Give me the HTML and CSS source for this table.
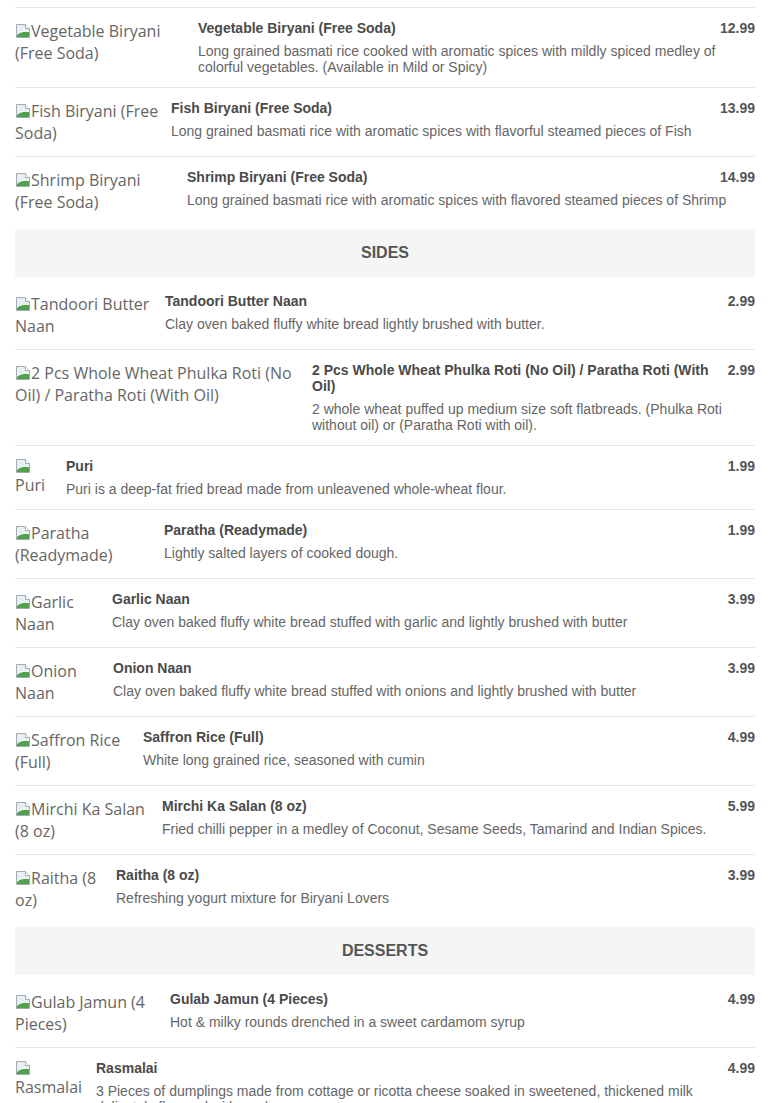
FILE: index.html
```html
<!DOCTYPE html>
<html lang="en">
<head>
<meta charset="utf-8">
<title>Menu</title>
<link rel="stylesheet" href="styles.css">
</head>
<body>
<svg class="defs" width="0" height="0" aria-hidden="true">
  <defs>
    <symbol id="broken" viewBox="0 0 16 16">
      <path d="M1.5 1.5h9l4 4v9h-13z" fill="#e9eef2" stroke="#a3acb3"/>
      <path d="M2 14 L2 11.5 Q6 7.5 14 8.5 L14 14 Z" fill="#52a04c"/>
      <path d="M2 11.5 Q6 7.5 14 8.5" fill="none" stroke="#ffffff" stroke-width="1"/>
      <path d="M10.5 1.5v4h4" fill="#ffffff" stroke="#a3acb3"/>
    </symbol>
  </defs>
</svg>
<div class="menu">
  <div class="lead"></div>

  <div class="item">
    <div class="thumb w-veg"><svg class="ico"><use href="#broken"/></svg>Vegetable Biryani (Free Soda)</div>
    <div class="body">
      <div class="head"><h3 class="name">Vegetable Biryani (Free Soda)</h3><span class="price">12.99</span></div>
      <p class="desc">Long grained basmati rice cooked with aromatic spices with mildly spiced medley of colorful vegetables. (Available in Mild or Spicy)</p>
    </div>
  </div>

  <div class="item">
    <div class="thumb w-fish"><svg class="ico"><use href="#broken"/></svg>Fish Biryani (Free Soda)</div>
    <div class="body">
      <div class="head"><h3 class="name">Fish Biryani (Free Soda)</h3><span class="price">13.99</span></div>
      <p class="desc">Long grained basmati rice with aromatic spices with flavorful steamed pieces of Fish</p>
    </div>
  </div>

  <div class="item last">
    <div class="thumb w-shrimp"><svg class="ico"><use href="#broken"/></svg>Shrimp Biryani (Free Soda)</div>
    <div class="body">
      <div class="head"><h3 class="name">Shrimp Biryani (Free Soda)</h3><span class="price">14.99</span></div>
      <p class="desc">Long grained basmati rice with aromatic spices with flavored steamed pieces of Shrimp</p>
    </div>
  </div>

  <h2 class="section">SIDES</h2>

  <div class="item">
    <div class="thumb w-tandoori"><svg class="ico"><use href="#broken"/></svg>Tandoori Butter Naan</div>
    <div class="body">
      <div class="head"><h3 class="name">Tandoori Butter Naan</h3><span class="price">2.99</span></div>
      <p class="desc">Clay oven baked fluffy white bread lightly brushed with butter.</p>
    </div>
  </div>

  <div class="item">
    <div class="thumb w-roti"><svg class="ico"><use href="#broken"/></svg>2 Pcs Whole Wheat Phulka Roti (No Oil) / Paratha Roti (With Oil)</div>
    <div class="body">
      <div class="head"><h3 class="name">2 Pcs Whole Wheat Phulka Roti (No Oil) / Paratha Roti (With Oil)</h3><span class="price">2.99</span></div>
      <p class="desc">2 whole wheat puffed up medium size soft flatbreads. (Phulka Roti without oil) or (Paratha Roti with oil).</p>
    </div>
  </div>

  <div class="item">
    <div class="thumb stack w-puri"><svg class="ico"><use href="#broken"/></svg>Puri</div>
    <div class="body">
      <div class="head"><h3 class="name">Puri</h3><span class="price">1.99</span></div>
      <p class="desc">Puri is a deep-fat fried bread made from unleavened whole-wheat flour.</p>
    </div>
  </div>

  <div class="item">
    <div class="thumb w-paratha"><svg class="ico"><use href="#broken"/></svg>Paratha (Readymade)</div>
    <div class="body">
      <div class="head"><h3 class="name">Paratha (Readymade)</h3><span class="price">1.99</span></div>
      <p class="desc">Lightly salted layers of cooked dough.</p>
    </div>
  </div>

  <div class="item">
    <div class="thumb w-garlic"><svg class="ico"><use href="#broken"/></svg>Garlic Naan</div>
    <div class="body">
      <div class="head"><h3 class="name">Garlic Naan</h3><span class="price">3.99</span></div>
      <p class="desc">Clay oven baked fluffy white bread stuffed with garlic and lightly brushed with butter</p>
    </div>
  </div>

  <div class="item">
    <div class="thumb w-onion"><svg class="ico"><use href="#broken"/></svg>Onion Naan</div>
    <div class="body">
      <div class="head"><h3 class="name">Onion Naan</h3><span class="price">3.99</span></div>
      <p class="desc">Clay oven baked fluffy white bread stuffed with onions and lightly brushed with butter</p>
    </div>
  </div>

  <div class="item">
    <div class="thumb w-saffron"><svg class="ico"><use href="#broken"/></svg>Saffron Rice (Full)</div>
    <div class="body">
      <div class="head"><h3 class="name">Saffron Rice (Full)</h3><span class="price">4.99</span></div>
      <p class="desc">White long grained rice, seasoned with cumin</p>
    </div>
  </div>

  <div class="item">
    <div class="thumb w-mirchi"><svg class="ico"><use href="#broken"/></svg>Mirchi Ka Salan (8 oz)</div>
    <div class="body">
      <div class="head"><h3 class="name">Mirchi Ka Salan (8 oz)</h3><span class="price">5.99</span></div>
      <p class="desc">Fried chilli pepper in a medley of Coconut, Sesame Seeds, Tamarind and Indian Spices.</p>
    </div>
  </div>

  <div class="item last">
    <div class="thumb w-raitha"><svg class="ico"><use href="#broken"/></svg>Raitha (8 oz)</div>
    <div class="body">
      <div class="head"><h3 class="name">Raitha (8 oz)</h3><span class="price">3.99</span></div>
      <p class="desc">Refreshing yogurt mixture for Biryani Lovers</p>
    </div>
  </div>

  <h2 class="section">DESSERTS</h2>

  <div class="item">
    <div class="thumb w-gulab"><svg class="ico"><use href="#broken"/></svg>Gulab Jamun (4 Pieces)</div>
    <div class="body">
      <div class="head"><h3 class="name">Gulab Jamun (4 Pieces)</h3><span class="price">4.99</span></div>
      <p class="desc">Hot &amp; milky rounds drenched in a sweet cardamom syrup</p>
    </div>
  </div>

  <div class="item last">
    <div class="thumb stack w-rasmalai"><svg class="ico"><use href="#broken"/></svg>Rasmalai</div>
    <div class="body">
      <div class="head"><h3 class="name">Rasmalai</h3><span class="price">4.99</span></div>
      <p class="desc">3 Pieces of dumplings made from cottage or ricotta cheese soaked in sweetened, thickened milk delicately flavored with cardamom.</p>
    </div>
  </div>
</div>
</body>
</html>
```

FILE: styles.css
```css
html, body {
  margin: 0;
  padding: 0;
  background: #ffffff;
}

body {
  font-family: "Open Sans", "Noto Sans", sans-serif;
  color: #666666;
}

.defs {
  position: absolute;
  width: 0;
  height: 0;
  overflow: hidden;
}

.menu {
  padding: 0 15px;
}

.lead {
  height: 7px;
  border-bottom: 1px solid #e6e6e6;
}

.item {
  display: flex;
  align-items: flex-start;
  padding: 12px 0;
  border-bottom: 1px solid #e6e6e6;
}

.item.last {
  border-bottom: none;
}

.thumb {
  flex: 0 0 auto;
  margin-right: 12px;
  font-size: 16px;
  line-height: normal;
  color: #666666;
}

.thumb .ico {
  width: 16px;
  height: 16px;
  vertical-align: -2px;
}

.thumb.stack .ico {
  display: block;
}

.w-veg { width: 171px; }
.w-fish { width: 144px; }
.w-shrimp { width: 160px; }
.w-tandoori { width: 138px; }
.w-roti { width: 285px; }
.w-puri { width: 39px; }
.w-paratha { width: 137px; }
.w-garlic { width: 85px; }
.w-onion { width: 86px; }
.w-saffron { width: 116px; }
.w-mirchi { width: 135px; }
.w-raitha { width: 89px; }
.w-gulab { width: 143px; }
.w-rasmalai { width: 69px; }

.body {
  flex: 1 1 auto;
  min-width: 0;
  font-family: "Liberation Sans", Arial, sans-serif;
}

.head {
  display: flex;
  justify-content: space-between;
  align-items: flex-start;
  gap: 10px;
  margin-bottom: 7px;
}

.name {
  margin: 0;
  font-size: 14px;
  font-weight: bold;
  line-height: normal;
  color: #4a4a4a;
}

.price {
  flex: 0 0 auto;
  font-size: 14px;
  font-weight: bold;
  line-height: normal;
  color: #555555;
}

.desc {
  margin: 0;
  font-size: 14px;
  line-height: normal;
  color: #666666;
}

.section {
  margin: 4px 0;
  height: 48px;
  line-height: 48px;
  background: #f5f5f5;
  text-align: center;
  font-family: "Liberation Sans", Arial, sans-serif;
  font-size: 16px;
  font-weight: bold;
  color: #555555;
}
```
